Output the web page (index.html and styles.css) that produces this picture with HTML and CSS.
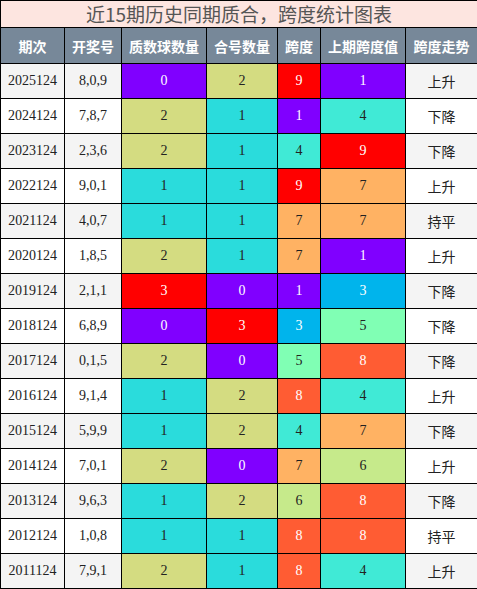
FILE: index.html
```html
<!DOCTYPE html>
<html lang="zh">
<head>
<meta charset="utf-8">
<link rel="stylesheet" href="styles.css">
</head>
<body>
<table class="grid">
  <colgroup>
    <col class="w1"><col class="w2"><col class="w3"><col class="w4"><col class="w5"><col class="w6"><col class="w7">
  </colgroup>
  <tr class="title-row"><td colspan="7" class="title">近15期历史同期质合，跨度统计图表</td></tr>
  <tr class="head">
    <th>期次</th><th>开奖号</th><th>质数球数量</th><th>合号数量</th><th>跨度</th><th>上期跨度值</th><th>跨度走势</th>
  </tr>
  <tr class="odd"><td class="n">2025124</td><td class="n">8,0,9</td><td class="n k-purple">0</td><td class="n k-olive">2</td><td class="n k-red">9</td><td class="n k-purple">1</td><td class="t">上升</td></tr>
  <tr class="even"><td class="n">2024124</td><td class="n">7,8,7</td><td class="n k-olive">2</td><td class="n k-cyan">1</td><td class="n k-purple">1</td><td class="n k-turq">4</td><td class="t">下降</td></tr>
  <tr class="odd"><td class="n">2023124</td><td class="n">2,3,6</td><td class="n k-olive">2</td><td class="n k-cyan">1</td><td class="n k-turq">4</td><td class="n k-red">9</td><td class="t">下降</td></tr>
  <tr class="even"><td class="n">2022124</td><td class="n">9,0,1</td><td class="n k-cyan">1</td><td class="n k-cyan">1</td><td class="n k-red">9</td><td class="n k-orange">7</td><td class="t">上升</td></tr>
  <tr class="odd"><td class="n">2021124</td><td class="n">4,0,7</td><td class="n k-cyan">1</td><td class="n k-cyan">1</td><td class="n k-orange">7</td><td class="n k-orange">7</td><td class="t">持平</td></tr>
  <tr class="even"><td class="n">2020124</td><td class="n">1,8,5</td><td class="n k-olive">2</td><td class="n k-cyan">1</td><td class="n k-orange">7</td><td class="n k-purple">1</td><td class="t">上升</td></tr>
  <tr class="odd"><td class="n">2019124</td><td class="n">2,1,1</td><td class="n k-red">3</td><td class="n k-purple">0</td><td class="n k-purple">1</td><td class="n k-blue">3</td><td class="t">下降</td></tr>
  <tr class="even"><td class="n">2018124</td><td class="n">6,8,9</td><td class="n k-purple">0</td><td class="n k-red">3</td><td class="n k-blue">3</td><td class="n k-mint">5</td><td class="t">下降</td></tr>
  <tr class="odd"><td class="n">2017124</td><td class="n">0,1,5</td><td class="n k-olive">2</td><td class="n k-purple">0</td><td class="n k-mint">5</td><td class="n k-coral">8</td><td class="t">下降</td></tr>
  <tr class="even"><td class="n">2016124</td><td class="n">9,1,4</td><td class="n k-cyan">1</td><td class="n k-olive">2</td><td class="n k-coral">8</td><td class="n k-turq">4</td><td class="t">上升</td></tr>
  <tr class="odd"><td class="n">2015124</td><td class="n">5,9,9</td><td class="n k-cyan">1</td><td class="n k-olive">2</td><td class="n k-turq">4</td><td class="n k-orange">7</td><td class="t">下降</td></tr>
  <tr class="even"><td class="n">2014124</td><td class="n">7,0,1</td><td class="n k-olive">2</td><td class="n k-purple">0</td><td class="n k-orange">7</td><td class="n k-lime">6</td><td class="t">上升</td></tr>
  <tr class="odd"><td class="n">2013124</td><td class="n">9,6,3</td><td class="n k-cyan">1</td><td class="n k-olive">2</td><td class="n k-lime">6</td><td class="n k-coral">8</td><td class="t">下降</td></tr>
  <tr class="even"><td class="n">2012124</td><td class="n">1,0,8</td><td class="n k-cyan">1</td><td class="n k-cyan">1</td><td class="n k-coral">8</td><td class="n k-coral">8</td><td class="t">持平</td></tr>
  <tr class="odd"><td class="n">2011124</td><td class="n">7,9,1</td><td class="n k-olive">2</td><td class="n k-cyan">1</td><td class="n k-coral">8</td><td class="n k-turq">4</td><td class="t">上升</td></tr>
</table>
</body>
</html>
```
FILE: styles.css
```css
html, body {
  margin: 0;
  padding: 0;
  background: #ffffff;
}
.grid {
  border-collapse: collapse;
  table-layout: fixed;
  width: 477px;
  font-family: "Liberation Serif", "Noto Sans CJK SC", serif;
}
.w1 { width: 64px; }
.w2 { width: 57px; }
.w3 { width: 85px; }
.w4 { width: 71px; }
.w5 { width: 43px; }
.w6 { width: 85px; }
.w7 { width: 72px; }
.grid td, .grid th {
  border: 1px solid #000;
  padding: 0;
  text-align: center;
  overflow: hidden;
  white-space: nowrap;
}
.title {
  height: 26px;
  background: #fde5e0;
  color: #555555;
  font-family: "Noto Sans CJK SC", sans-serif;
  font-size: 19px;
  line-height: 26px;
}
.head th {
  height: 35px;
  background: #778899;
  color: #ffffff;
  font-family: "Noto Sans CJK SC", sans-serif;
  font-weight: bold;
  font-size: 14px;
}
.grid tr.odd td, .grid tr.even td {
  height: 34px;
}
.odd td { background: #f4f4f4; }
.even td { background: #ffffff; }
.n {
  font-family: "Liberation Serif", serif;
  font-size: 14px;
  color: #222222;
}
.t {
  font-family: "Noto Sans CJK SC", sans-serif;
  font-size: 14px;
  color: #222222;
}
.grid td.k-purple { background: #8000ff; color: #ffffff; }
.grid td.k-olive { background: #d4dc81; color: #222222; }
.grid td.k-cyan { background: #2adcdc; color: #222222; }
.grid td.k-red { background: #ff0000; color: #ffffff; }
.grid td.k-turq { background: #40ead6; color: #222222; }
.grid td.k-orange { background: #ffb263; color: #222222; }
.grid td.k-lime { background: #c6ea8b; color: #222222; }
.grid td.k-coral { background: #ff5c33; color: #ffffff; }
.grid td.k-blue { background: #00b4ec; color: #ffffff; }
.grid td.k-mint { background: #80ffb4; color: #222222; }
```
